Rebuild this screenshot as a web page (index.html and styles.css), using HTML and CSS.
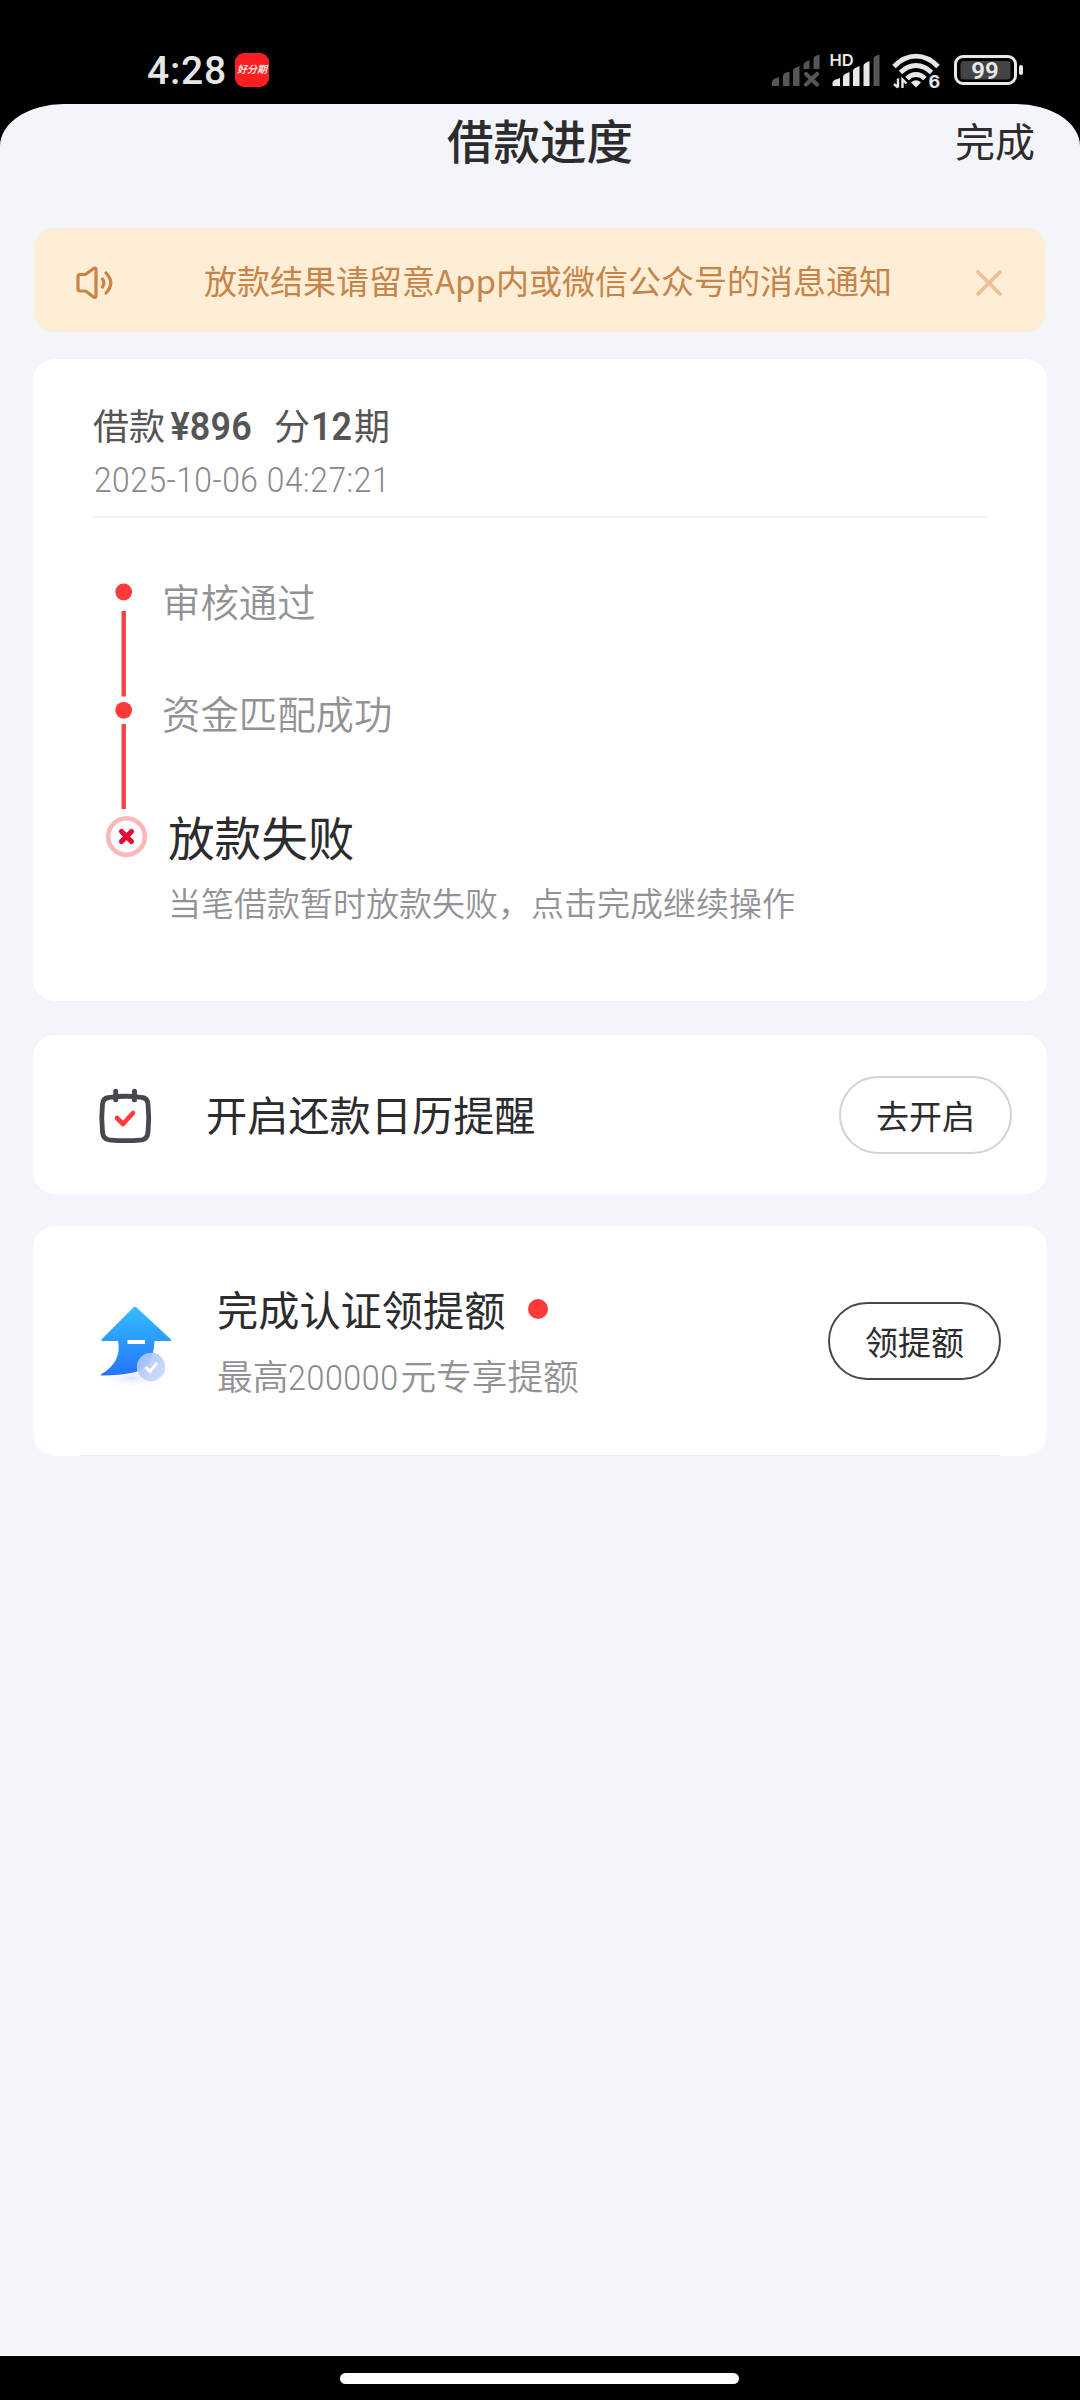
FILE: index.html
```html
<!DOCTYPE html>
<html lang="zh-CN">
<head>
<meta charset="utf-8">
<title>借款进度</title>
<link rel="stylesheet" href="styles.css">
</head>
<body>
<div class="status">
  <span class="clock">4:28</span>
  <span class="app-badge">好分期</span>
  <svg class="indicators" width="260" height="44" viewBox="768 48 260 44">
    <g fill="#565656">
      <path d="M772 86v-4q0-2 2-3l5-2v9zM783 86v-10q0-2 2-3l4.500-1.500v14.500zM793 86v-15q0-2 2-3l4.500-2v20zM803.500 69v-4q0-2 2-3l4-2v9zM813.500 69v-10q0-2 2-3l4-1.500v14.500z"/>
      <path d="M806 74l11 10.500M817 74l-11 10.500" stroke="#565656" stroke-width="4.200" stroke-linecap="round"/>
      <path d="M873.500 86v-27q0-2 2-3l4-1.500v31.500z"/>
    </g>
    <text x="829.500" y="66" class="hd">HD</text>
    <path fill="#e8e8e8" d="M832.500 86v-3q0-2 2-3l5.500-2v8zM843 86v-9q0-2 2-3l4.500-2v14zM853 86v-15q0-2 2-3l4.500-2v20zM863.500 86v-20q0-2 2-3l4-2v25z"/>
    <g fill="none" stroke="#e8e8e8" stroke-width="4.800">
      <path d="M894 66.500q10-10.300 22-10.300t22 10.300"/>
      <path d="M900.500 72.500q7-7 15.500-7t15.500 7"/>
      <path d="M907 78.500q4-4 9-4t9 4"/>
    </g>
    <path fill="#e8e8e8" d="M911 82.500q5-4.500 10 0l-5 5z"/>
    <path fill="none" stroke="#e8e8e8" stroke-width="2.400" d="M898 78.500v9M894 84l4 3.500M902.500 88v-8.500l4 4"/>
    <text x="928.500" y="88" class="six">6</text>
    <rect x="955.500" y="56.500" width="60" height="27" rx="7.500" fill="none" stroke="#e8e8e8" stroke-width="3"/>
    <rect x="960.500" y="61" width="50" height="18.500" rx="3.500" fill="#444"/>
    <rect x="1019" y="65" width="4" height="10" rx="2" fill="#e8e8e8"/>
    <text x="985" y="79" text-anchor="middle" class="level">99</text>
  </svg>
</div>

<main class="sheet">
  <header class="header">
    <h1 class="title">借款进度</h1>
    <a class="done">完成</a>
  </header>

  <section class="notice">
    <svg class="speaker" width="42" height="36" viewBox="0 0 42 36" fill="none" stroke="#c98443" stroke-width="3.200" stroke-linecap="round" stroke-linejoin="round">
      <path d="M5 9.500h5.500l8-6q2.500-1.500 2.500 1.500v25.500q0 3-2.500 1.500l-8-6H5q-2 0-2-2v-12.500q0-2 2-2z"/>
      <path d="M27.500 14q3 4 0 8M31 8q9.500 10 0 20"/>
    </svg>
    <span class="notice-text">放款结果请留意App内或微信公众号的消息通知</span>
    <svg class="close" width="28" height="28" viewBox="0 0 28 28" stroke="#edc195" stroke-width="3.800" stroke-linecap="round"><path d="M3 3l22 22M25 3L3 25"/></svg>
  </section>

  <section class="card progress">
    <div class="loan">
      <p class="loan-line"><span>借款</span><b class="amount">¥896</b><span>分</span><b class="term">12</b><span>期</span></p>
      <p class="date">2025-10-06 04:27:21</p>
    </div>
    <div class="timeline">
      <svg class="rail" width="44" height="280" viewBox="104 580 44 280">
        <path d="M123.700 611v85.500M123.700 724v85" stroke="#f24444" stroke-width="4.400"/>
        <circle cx="123.700" cy="592" r="8.400" fill="#ff3a3a"/>
        <circle cx="123.700" cy="710.300" r="8.400" fill="#ff3a3a"/>
        <circle cx="126.500" cy="836.500" r="18.300" fill="none" stroke="#fbb8b8" stroke-width="4.600"/>
        <path d="M121.500 831.500l10 10M131.500 831.500l-10 10" stroke="#ea0a32" stroke-width="5.200" stroke-linecap="round"/>
      </svg>
      <div class="steps">
        <p class="step">审核通过</p>
        <p class="step">资金匹配成功</p>
        <p class="step-current">放款失败</p>
        <p class="step-note">当笔借款暂时放款失败，点击完成继续操作</p>
      </div>
    </div>
  </section>

  <section class="card reminder">
    <svg class="calendar" width="56" height="60" viewBox="97 1086 56 60" fill="none" stroke-linecap="round" stroke-linejoin="round">
      <path d="M109 1097.500Q125.500 1095 142 1097.500Q147.500 1098 148 1104Q149.500 1118 148 1132Q147.500 1139 142 1139.800Q125.500 1141.500 109 1139.800Q103 1139 102.500 1132Q101 1118 102.500 1104Q103 1098 109 1097.500z" stroke="#47474f" stroke-width="4.800"/>
      <path d="M115.700 1091.200v8.600M134.500 1091.200v8.600" stroke="#47474f" stroke-width="5"/>
      <path d="M117 1118l6 6 10-11" stroke="#ff3b3f" stroke-width="4.600"/>
    </svg>
    <span class="card-title">开启还款日历提醒</span>
    <a class="button button-light">去开启</a>
  </section>

  <section class="card raise">
    <svg class="arrow" width="84" height="90" viewBox="93 1300 84 90">
      <defs>
        <linearGradient id="arrowFill" x1="0" y1="0" x2="0" y2="1"><stop offset="0" stop-color="#35bdfd"/><stop offset=".5" stop-color="#2c99fe"/><stop offset="1" stop-color="#2674fb"/></linearGradient>
        <linearGradient id="badgeFill" x1="0" y1="0" x2="1" y2="1"><stop offset="0" stop-color="#a3befc"/><stop offset="1" stop-color="#d2dcfe"/></linearGradient>
        <radialGradient id="glow"><stop offset="0" stop-color="#dfe5ff"/><stop offset="1" stop-color="#fff" stop-opacity="0"/></radialGradient>
      </defs>
      <ellipse cx="132" cy="1378" rx="36" ry="11" fill="url(#glow)"/>
      <path d="M133.300 1307.500q1.600-1.400 3.200 0l34 31.500q1.500 2-1 2H154.500q-.5 14-6.500 24-8 10-46 10.500-3 0 0-1.800 20-12 16-32.700H103q-2.500 0-1-2z" fill="url(#arrowFill)"/>
      <path d="M127.500 1342h17.500" stroke="#fff" stroke-width="4"/>
      <circle cx="151" cy="1367" r="14.200" fill="url(#badgeFill)" fill-opacity=".93"/>
      <path d="M145.500 1367l4.500 4.500 7-8.500" fill="none" stroke="#fff" stroke-width="3"/>
    </svg>
    <div class="raise-text">
      <p class="raise-title"><span class="card-title">完成认证领提额</span><i class="dot"></i></p>
      <p class="raise-note">最高<span class="figure">200000</span>元专享提额</p>
    </div>
    <a class="button button-dark">领提额</a>
  </section>
</main>

<footer class="home"><span class="home-bar"></span></footer>
</body>
</html>
```
FILE: styles.css
```css
* { box-sizing: border-box; }
body {
  margin: 0;
  width: 1080px;
  height: 2400px;
  display: flex;
  flex-direction: column;
  background: #000;
  font-family: "Noto Sans CJK SC", sans-serif;
  color: #2c2c2e;
}
h1, p { margin: 0; font-weight: 400; white-space: nowrap; }
svg { flex: none; display: block; }

.status {
  height: 104px;
  padding: 48px 52px 0 147px;
  display: flex;
  align-items: flex-start;
}
.clock {
  width: 88px;
  padding-top: 1px;
  font: 500 39px/44px Roboto, sans-serif;
  letter-spacing: .8px;
  color: #e6e6e6;
}
.app-badge {
  width: 34px;
  height: 34px;
  margin-top: 5px;
  border-radius: 9px;
  background: #fb1f22;
  color: #fff;
  font-size: 10px;
  font-style: italic;
  font-weight: 500;
  line-height: 32px;
  text-align: center;
  white-space: nowrap;
}
.indicators { margin-left: auto; }
.hd { font: 600 16.500px Inter, sans-serif; fill: #e8e8e8; }
.six { font: 700 18px Inter, sans-serif; fill: #e8e8e8; }
.level { font: 600 24px Roboto, sans-serif; fill: #e8e8e8; }

.sheet {
  height: 2252px;
  padding: 0 33px;
  border-radius: 64px 64px 0 0 / 42px 42px 0 0;
  background: #f4f5fa;
}
.header {
  height: 124px;
  padding: 4px 12px 0 0;
  display: grid;
  grid-template-columns: 1fr auto 1fr;
  align-items: start;
}
.title {
  grid-column: 2;
  margin-left: 12px;
  font-size: 46.500px;
  font-weight: 500;
  line-height: 61px;
}
.done {
  justify-self: end;
  font-size: 40px;
  line-height: 64px;
}

.notice {
  height: 104px;
  margin: 0 1px;
  padding: 0 43px 0 41px;
  display: flex;
  align-items: center;
  border-radius: 20px;
  background: #ffeed5;
}
.notice-text {
  margin-left: 87px;
  font-size: 33px;
  line-height: 48px;
  color: #c5854a;
  white-space: nowrap;
}
.speaker { margin-top: 5px; }
.close { margin: 6px 0 0 auto; }

.card {
  border-radius: 22px;
  background: #fff;
}
.progress {
  height: 642px;
  margin-top: 27px;
  padding: 41px 60px 0;
}
.loan {
  padding-bottom: 18px;
  border-bottom: 2px solid #f2f2f4;
}
.loan-line {
  display: flex;
  height: 48px;
  font-size: 36px;
  line-height: 49px;
  color: #555;
}
.amount, .term {
  font: 600 39px/55px Roboto, sans-serif;
  transform: scaleX(.92);
  transform-origin: left;
}
.amount { width: 109px; padding-left: 6px; letter-spacing: .2px; }
.term { width: 44px; padding-left: 1px; }
.date {
  margin: 14px 0 0;
  padding-left: 1px;
  font: 300 34.500px/36px Roboto, sans-serif;
  letter-spacing: .6px;
  color: #88888c;
  transform: scaleX(.92);
  transform-origin: left;
}
.timeline { display: flex; }
.rail { margin: 62px 0 0 11px; }
.steps { padding: 54px 0 0 14px; }
.step {
  margin-bottom: 56px;
  font-size: 38.400px;
  font-weight: 350;
  line-height: 56px;
  color: #929296;
}
.step-current {
  margin: 66px 0 14px 6px;
  font-size: 46.600px;
  line-height: 60px;
}
.step-note {
  margin-left: 6px;
  font-size: 33px;
  font-weight: 350;
  line-height: 44px;
  color: #929296;
}

.card-title { font-size: 41.200px; line-height: 60px; }
.reminder {
  height: 159px;
  margin-top: 34px;
  padding: 0 35px 0 64px;
  display: flex;
  align-items: center;
}
.reminder .calendar { margin-top: 2px; }
.reminder .card-title { margin: -3px 0 0 53px; }
.button {
  width: 173px;
  height: 78px;
  margin-left: auto;
  border-radius: 39px;
  font-size: 33px;
  line-height: 75px;
  text-align: center;
}
.button-light { border: 2px solid #d2d2d2; }
.button-dark { border: 2px solid #484848; }

.raise {
  height: 230px;
  margin-top: 32px;
  padding: 0 46px 0 60px;
  display: flex;
  align-items: center;
  background: linear-gradient(#ececf0, #ececf0) 47px 229px / 920px 1px no-repeat #fff;
}
.arrow { margin-top: 7px; }
.raise-text { padding: 0 0 0 40px; }
.raise-title { display: flex; align-items: center; gap: 23px; }
.raise-title .card-title { margin-top: -2px; }
.dot {
  width: 20px;
  height: 20px;
  border-radius: 50%;
  background: #ff3a3a;
}
.raise-note {
  margin-top: 13px;
  font-size: 35.700px;
  font-weight: 350;
  line-height: 48px;
  color: #929296;
}
.figure {
  display: inline-block;
  width: 112px;
  font-family: Roboto, sans-serif;
  font-weight: 300;
  color: #88888c;
  transform: scaleX(.9);
  transform-origin: left;
  letter-spacing: .7px;
}

.home {
  height: 44px;
  padding: 17px 0 0 340px;
}
.home-bar {
  display: block;
  width: 399px;
  height: 11px;
  border-radius: 6px;
  background: #fff;
}
```
